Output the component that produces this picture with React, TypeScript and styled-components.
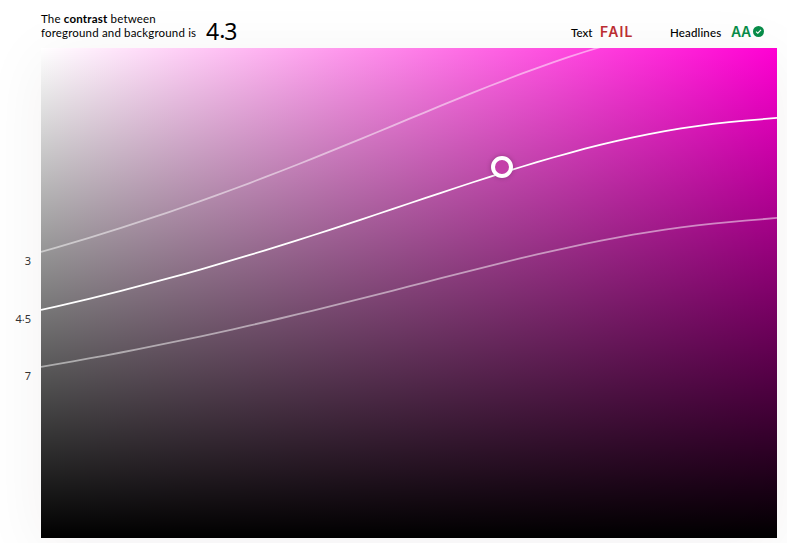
import React from "react";
import styled, { createGlobalStyle } from "styled-components";

const WIDTH = 736;
const HEIGHT = 490;
const STEP = 16;
const HUE = [255, 0, 211];

const toLinear = (c: number) =>
  c <= 0.04045 ? c / 12.92 : Math.pow((c + 0.055) / 1.055, 2.4);

const luminance = (s: number, v: number) => {
  const [r, g, b] = HUE.map((h) => toLinear(v * (1 - s + (s * h) / 255)));
  return 0.2126 * r + 0.7152 * g + 0.0722 * b;
};

/* Path through every colour whose contrast with white equals the ratio. */
const contourPath = (ratio: number) => {
  const target = 1.05 / ratio - 0.05;
  const points: string[] = [];
  for (let x = 0; x <= WIDTH; x += STEP) {
    const s = x / WIDTH;
    let low = 0;
    let high = 1.5;
    for (let i = 0; i < 30; i++) {
      const mid = (low + high) / 2;
      if (luminance(s, mid) < target) low = mid;
      else high = mid;
    }
    points.push(`${x} ${((1 - low) * HEIGHT).toFixed(2)}`);
  }
  return `M${points.join("L")}`;
};

const GlobalStyle = createGlobalStyle`
  html, body { margin: 0; background: #fff; overflow: hidden; }
  * { box-sizing: border-box; }
`;

const Page = styled.main`
  width: 787px;
  height: 543px;
  padding: 0 10px 5px 0;
  overflow: hidden;
  display: grid;
  grid-template: 48px 490px / 41px 736px;
  color: #000;
  font-family: Lato, "Open Sans", sans-serif;
`;

const Header = styled.header`
  grid-column: 2;
  display: flex;
  align-items: flex-start;
  z-index: 1;
`;

const Description = styled.p`
  margin: 12px 0 0;
  width: 165px;
  font-size: 11.5px;
  line-height: 14px;
  letter-spacing: 0.17px;
  white-space: nowrap;
`;

const FirstLine = styled.span`
  display: block;
  letter-spacing: 0.18px;
`;

const Ratio = styled.output`
  display: flex;
  margin-top: 16px;
  font: 23px/30px "Noto Sans", sans-serif;
`;

const RaisedDot = styled.span<{ $lift: number; $width: number }>`
  width: ${(p) => p.$width}px;
  text-align: center;
  transform: translateY(${(p) => -p.$lift}px);
`;

const Results = styled.div`
  display: flex;
  margin: 22px 0 0 auto;
  padding-right: 13px;
  height: 20px;
  line-height: 20px;
`;

const Result = styled.div<{ $gap: number }>`
  display: flex;
  margin-left: ${(p) => p.$gap}px;
`;

const ResultLabel = styled.span<{ $width: number; $spacing: number }>`
  width: ${(p) => p.$width}px;
  font-size: 11.5px;
  font-weight: 500;
  letter-spacing: ${(p) => p.$spacing}px;
  line-height: 22px;
`;

const Grade = styled.strong<{ $color: string; $spacing: number; $width: number }>`
  display: flex;
  align-items: center;
  width: ${(p) => p.$width}px;
  color: ${(p) => p.$color};
  font: 600 14px/20px Inter, sans-serif;
  letter-spacing: ${(p) => p.$spacing}px;
  height: 19px;
`;

const Axis = styled.aside`
  grid-row: 2;
  grid-column: 1;
  z-index: 1;
  display: flex;
  flex-direction: column;
  align-items: flex-end;
  padding: 205px 10px 0 0;
  font: 11px/16px "Noto Sans", sans-serif;
  color: #333;
`;

const Tick = styled.span`
  display: flex;
  height: 57.5px;
`;

const Panel = styled.section`
  grid-row: 2;
  grid-column: 2;
  position: relative;
  background:
    linear-gradient(to bottom, transparent, #000),
    linear-gradient(to right, #fff, rgb(${HUE.join(",")}));
  box-shadow: 0 10px 60px rgba(50, 0, 30, 0.06);
`;

const Curves = styled.svg`
  display: block;
  width: 736px;
  height: 490px;
  overflow: hidden;
  fill: none;
  stroke: #fff;
  stroke-width: 1.8;
`;

const Handle = styled.div`
  position: absolute;
  left: 450px;
  top: 108px;
  width: 22px;
  height: 22px;
  border: 4px solid #fff;
  border-radius: 50%;
  background: #c43fa9;
  box-shadow: 0 0 5px rgba(0, 0, 0, 0.25);
`;

const Check = styled.svg`
  flex: none;
  width: 11px;
  height: 11px;
  margin-left: auto;
`;

export default function App() {
  return (
    <>
      <GlobalStyle />
      <Page>
        <Header>
          <Description>
            <FirstLine>The <b>contrast</b> between</FirstLine>
            foreground and background is
          </Description>
          <Ratio>4<RaisedDot $lift={2} $width={5}>.</RaisedDot>3</Ratio>
          <Results>
            <Result $gap={0}>
              <ResultLabel $width={29} $spacing={0}>Text</ResultLabel>
              <Grade $color="#bb2d32" $spacing={1.2} $width={35}>FAIL</Grade>
            </Result>
            <Result $gap={35}>
              <ResultLabel $width={61} $spacing={0.15}>Headlines</ResultLabel>
              <Grade $color="#078b48" $spacing={-0.5} $width={33}>
                AA
                <Check viewBox="0 0 11 11">
                  <circle cx="5.5" cy="5.5" r="5.5" fill="#078b48" />
                  <path d="M3 5.6 4.8 7.2 8 3.8" fill="none" stroke="#fff" strokeWidth="1.1" />
                </Check>
              </Grade>
            </Result>
          </Results>
        </Header>
        <Axis>
          <Tick>3</Tick>
          <Tick>4<RaisedDot $lift={2} $width={3}>.</RaisedDot>5</Tick>
          <Tick>7</Tick>
        </Axis>
        <Panel>
          <Curves viewBox={`0 0 ${WIDTH} ${HEIGHT}`}>
            <path d={contourPath(3)} opacity="0.5" />
            <path d={contourPath(4.5)} />
            <path d={contourPath(7)} opacity="0.5" />
          </Curves>
          <Handle />
        </Panel>
      </Page>
    </>
  );
}
